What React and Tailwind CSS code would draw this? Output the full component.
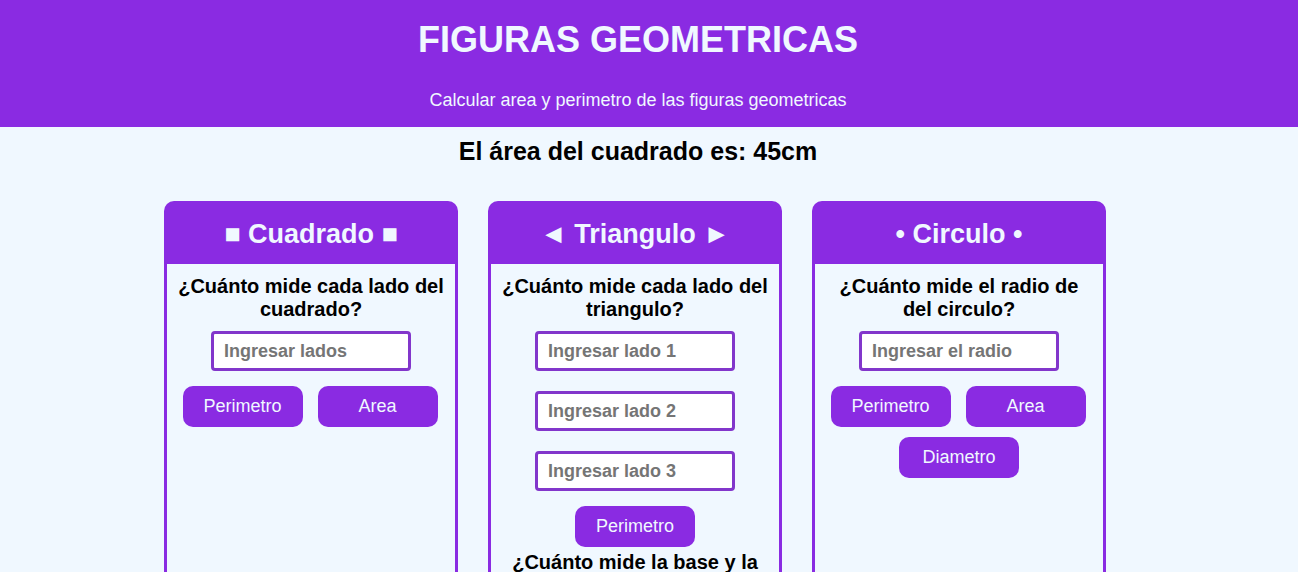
import React from "react";

const font = { fontFamily: '"Liberation Sans", Arial, sans-serif' };

function Input({ placeholder }) {
  return (
    <input
      type="text"
      placeholder={placeholder}
      className="w-[200px] h-[40px] bg-white border-[3px] border-[#8236cb] rounded-[4px] pl-[10px] text-[18px] font-bold text-black placeholder:text-[#757575] outline-none"
    />
  );
}

function Btn({ children }) {
  return (
    <button className="w-[120px] h-[41px] bg-[#8a2be2] text-[#f0f8ff] text-[18px] rounded-[10px]">
      {children}
    </button>
  );
}

function Card({ title, children }) {
  return (
    <div className="w-[294px] flex flex-col">
      <div className="h-[63px] pt-[4px] bg-[#8a2be2] rounded-t-[10px] flex items-center justify-center text-[27px] font-bold text-[#f0f8ff]">
        {title}
      </div>
      <div className="flex-1 border-x-[3px] border-b-[3px] border-[#8a2be2] pt-[11px] px-[10px] pb-[20px] flex flex-col items-center">
        {children}
      </div>
    </div>
  );
}

function Question({ children }) {
  return (
    <p className="text-[20px] leading-[23px] font-bold text-black text-center">{children}</p>
  );
}

export default function App() {
  return (
    <div style={font} className="min-h-screen bg-[#f0f8ff] pb-[40px]">
      <header className="bg-[#8a2be2] h-[127px] pr-[22px] flex flex-col items-center">
        <h1 className="mt-[19px] text-[36px] leading-[41px] font-bold text-[#f0f8ff]">
          FIGURAS GEOMETRICAS
        </h1>
        <p className="mt-[30px] text-[18px] leading-[21px] text-[#f0f8ff]">
          Calcular area y perimetro de las figuras geometricas
        </p>
      </header>
      <p className="pr-[22px] mt-[10px] text-center text-[25px] leading-[29px] font-bold text-black">
        El área del cuadrado es: 45cm
      </p>
      <div className="mt-[35px] flex justify-center items-stretch gap-[30px] pr-[28px]">
        <Card title="■ Cuadrado ■">
          <Question>¿Cuánto mide cada lado del cuadrado?</Question>
          <div className="mt-[10px]">
            <Input placeholder="Ingresar lados" />
          </div>
          <div className="mt-[15px] mr-[2px] flex gap-[15px]">
            <Btn>Perimetro</Btn>
            <Btn>Area</Btn>
          </div>
        </Card>
        <Card title="◄ Triangulo ►">
          <Question>¿Cuánto mide cada lado del triangulo?</Question>
          <div className="mt-[10px] flex flex-col gap-[20px]">
            <Input placeholder="Ingresar lado 1" />
            <Input placeholder="Ingresar lado 2" />
            <Input placeholder="Ingresar lado 3" />
          </div>
          <div className="mt-[15px]">
            <Btn>Perimetro</Btn>
          </div>
          <div className="mt-[4px]">
            <Question>¿Cuánto mide la base y la altura del triangulo?</Question>
          </div>
          <div className="mt-[10px] flex flex-col gap-[20px]">
            <Input placeholder="Ingresar la base" />
            <Input placeholder="Ingresar la altura" />
          </div>
          <div className="mt-[15px]">
            <Btn>Area</Btn>
          </div>
        </Card>
        <Card title="• Circulo •">
          <Question>¿Cuánto mide el radio de del circulo?</Question>
          <div className="mt-[10px]">
            <Input placeholder="Ingresar el radio" />
          </div>
          <div className="mt-[15px] mr-[2px] flex gap-[15px]">
            <Btn>Perimetro</Btn>
            <Btn>Area</Btn>
          </div>
          <div className="mt-[10px]">
            <Btn>Diametro</Btn>
          </div>
        </Card>
      </div>
    </div>
  );
}
